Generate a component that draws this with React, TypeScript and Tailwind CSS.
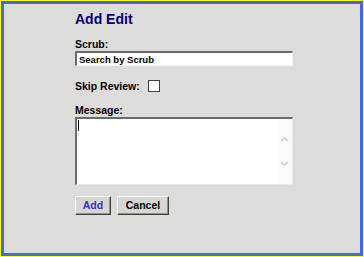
import React from 'react';

const App: React.FC = () => {
  return (
    <div className="w-[364px] h-[257px] border border-[#ffff00] bg-[#ffff00]">
      <div
        className="h-full border-[3px] border-[#4169e1] bg-[#dcdcda] pl-[71px] pt-[7px] text-black"
        style={{ fontFamily: '"Liberation Sans", Arial, sans-serif' }}
      >
        <h2 className="text-[14px] leading-[16px] font-bold text-[#000080]">Add Edit</h2>

        <div className="mt-[11px] text-[10.5px] leading-[12px] font-bold">Scrub:</div>
        <input
          type="text"
          defaultValue="Search by Scrub"
          className="mt-[1px] block w-[218px] h-[15px] bg-white px-[2px] text-[9.5px] font-bold border-t-2 border-l-2 border-t-[#6b6b6b] border-l-[#6b6b6b] border-r border-b border-r-[#f4f4f4] border-b-[#f4f4f4] outline-none"
        />

        <div className="mt-[14px] flex items-center gap-[8px]">
          <span className="text-[10.5px] leading-[12px] font-bold">Skip Review:</span>
          <span className="block w-[12px] h-[12px] bg-white border border-[#404040]" />
        </div>

        <div className="mt-[12px] text-[10.5px] leading-[12px] font-bold">Message:</div>
        <div className="mt-[1px] flex w-[218px] h-[68px] bg-white border-t-2 border-l-2 border-t-[#6b6b6b] border-l-[#6b6b6b] border-r border-b border-r-[#e8e8e8] border-b-[#e8e8e8]">
          <div className="flex-1 pl-[1px] pt-[1px]">
            <div className="w-[1px] h-[11px] bg-black" />
          </div>
          <div className="w-[15px] flex flex-col items-center justify-around bg-[#fbfbfb] py-[8px]">
            <svg width="9" height="6" viewBox="0 0 9 6">
              <path d="M1 5 L4.5 1.5 L8 5" fill="none" stroke="#c8c8c8" strokeWidth="1.2" />
            </svg>
            <svg width="9" height="6" viewBox="0 0 9 6">
              <path d="M1 1 L4.5 4.5 L8 1" fill="none" stroke="#c8c8c8" strokeWidth="1.2" />
            </svg>
          </div>
        </div>

        <div className="mt-[11px] flex gap-[6px]">
          <button className="w-[36px] h-[19px] bg-[#d8d6d0] text-[10.5px] font-bold text-[#3333cc] border border-t-white border-l-white border-r-[#404040] border-b-[#404040] shadow-[inset_-1px_-1px_0_#909090]">
            Add
          </button>
          <button className="w-[52px] h-[19px] bg-[#d8d6d0] text-[10.5px] font-bold text-black border border-t-white border-l-white border-r-[#404040] border-b-[#404040] shadow-[inset_-1px_-1px_0_#909090]">
            Cancel
          </button>
        </div>
      </div>
    </div>
  );
};

export default App;
